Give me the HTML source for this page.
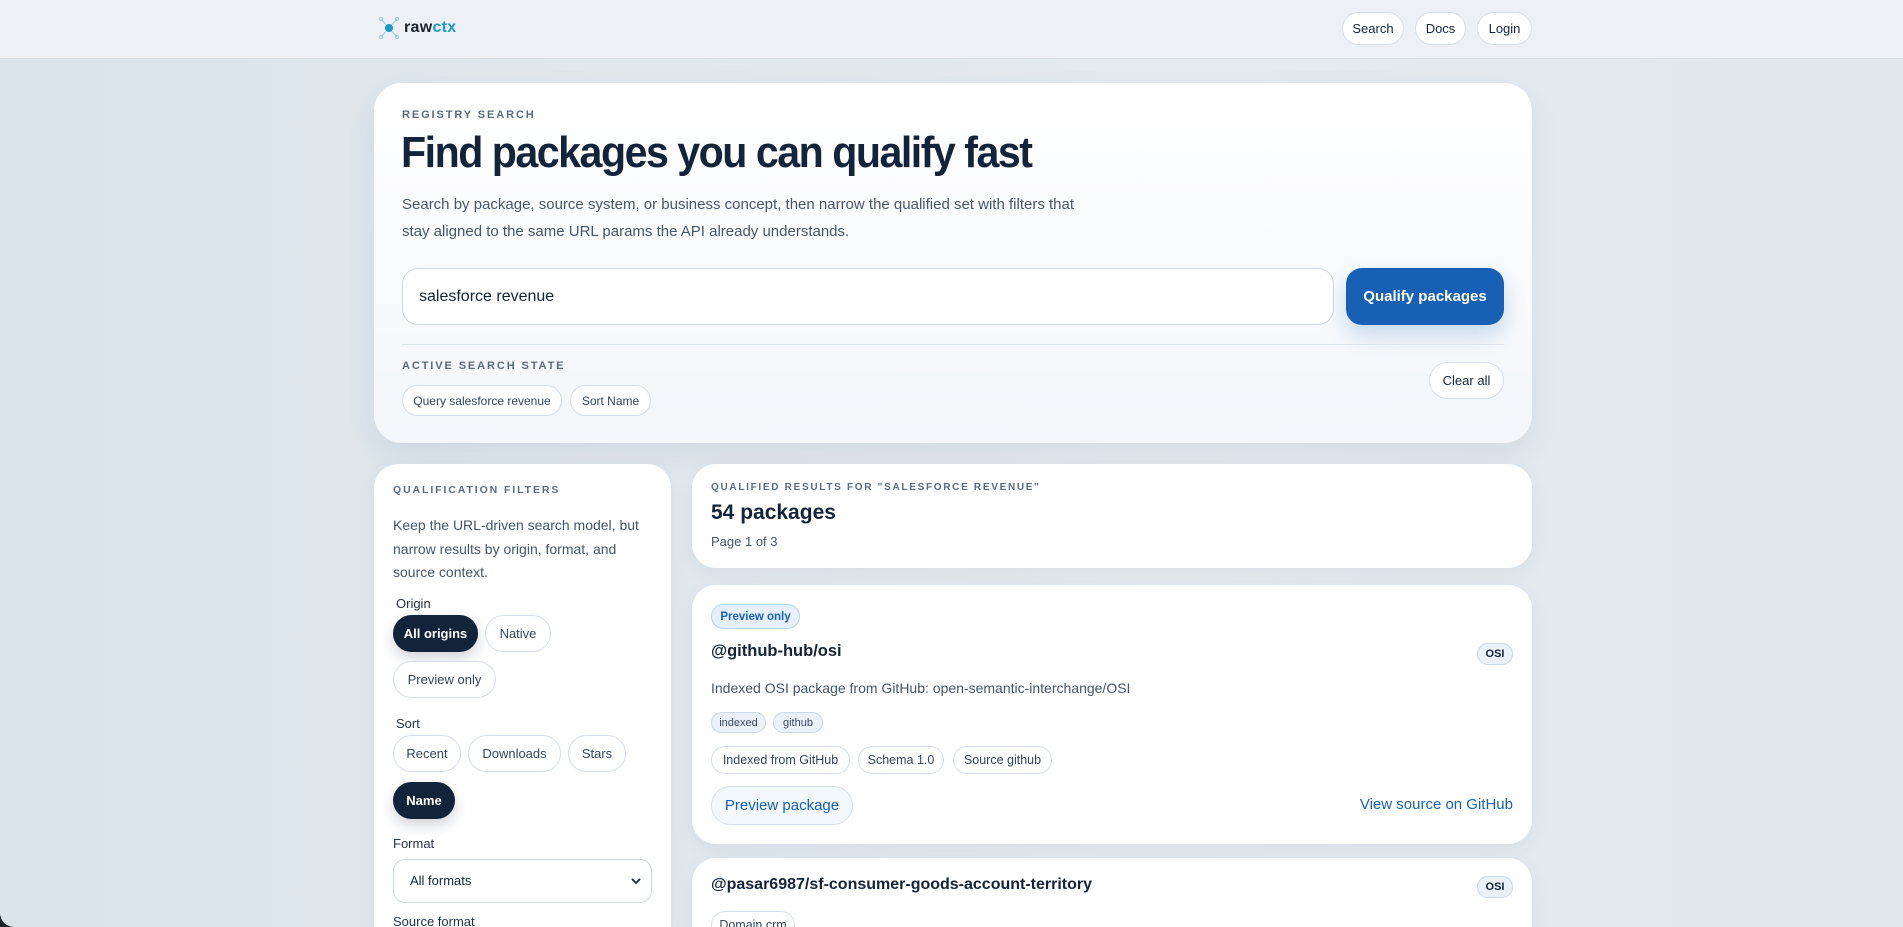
<!DOCTYPE html>
<html><head><meta charset="utf-8"><style>
*{box-sizing:border-box;margin:0;padding:0}
html,body{width:1903px;height:927px;overflow:hidden;background:#1a2328}
#pg{position:absolute;left:0;top:0;width:1903px;height:927px;background:linear-gradient(90deg,#dbe4eb,#e4eaef 60%,#e2e8ee);border-bottom-left-radius:14px;overflow:hidden;font-family:"Liberation Sans","Noto Sans CJK KR",sans-serif;color:#13243a}
.a{position:absolute;white-space:nowrap}
.hdr{left:0;top:0;width:1903px;height:59px;background:#edf1f5;border-bottom:1px solid #d6dfe7}
.nav{height:33px;top:12px;border:1px solid #d6dee8;border-radius:17px;background:#fff;font-size:13px;display:flex;align-items:center;justify-content:center;color:#13243a}
.card{background:#fff;border-radius:24px;box-shadow:0 6px 20px rgba(40,70,110,.06)}
.lbl{font-size:11px;font-weight:bold;letter-spacing:1.9px;color:#5a6b80}
.pill{border:1px solid #d6dfe9;border-radius:20px;background:#fff;display:flex;align-items:center;justify-content:center;font-size:13px;color:#34465b}
.dk{background:#13243a;color:#fff;border-color:#13243a;font-weight:bold;box-shadow:0 6px 14px rgba(19,36,58,.2)}
.tag{border:1px solid #c9d7e8;background:#eaf1f9;border-radius:12px;font-size:11px;display:flex;align-items:center;justify-content:center;color:#3a4b60}
</style></head><body><div id="pg">
<div class="a hdr"></div>
<svg class="a" style="left:378px;top:16px" width="22" height="24" viewBox="0 0 22 24"><g stroke="#9fd4e4" stroke-width="1" fill="none"><line x1="3" y1="3" x2="19" y2="21"/><line x1="19" y1="3" x2="3" y2="21"/><circle cx="3" cy="3" r="1.6"/><circle cx="19" cy="3" r="1.6"/><circle cx="3" cy="21" r="1.6"/><circle cx="19" cy="21" r="1.6"/></g><circle cx="11" cy="12" r="4" fill="#1a9ac4"/></svg>
<div class="a" style="left:404px;top:19px;font-size:16px;font-weight:bold;letter-spacing:.3px"><span style="color:#1b2530">raw</span><span style="color:#1d9bc2">ctx</span></div>
<div class="a nav" style="left:1342px;width:62px">Search</div>
<div class="a nav" style="left:1415px;width:51px">Docs</div>
<div class="a nav" style="left:1477px;width:55px">Login</div>

<div class="a card" style="left:374px;top:83px;width:1158px;height:360px;border-radius:28px;background:linear-gradient(180deg,#fff,#f3f6fa);box-shadow:0 12px 30px rgba(40,70,110,.08)"></div>
<div class="a lbl" style="left:402px;top:109px">REGISTRY SEARCH</div>
<div class="a" style="left:401px;top:126px;font-size:44px;font-weight:bold;letter-spacing:-1.6px;line-height:54px;color:#13243a;transform:scaleX(.935);transform-origin:left">Find packages you can qualify fast</div>
<div class="a" style="left:402px;top:191px;font-size:15px;line-height:27px;color:#45566b;white-space:normal;width:700px">Search by package, source system, or business concept, then narrow the qualified set with filters that stay aligned to the same URL params the API already understands.</div>
<div class="a" style="left:402px;top:268px;width:932px;height:57px;border:1px solid #cfd9e3;border-radius:16px;background:#fff;font-size:16px;line-height:55px;padding-left:16px;color:#13243a">salesforce revenue</div>
<div class="a" style="left:1346px;top:268px;width:158px;height:57px;border-radius:16px;background:#1760b5;color:#fff;font-size:15px;font-weight:bold;display:flex;align-items:center;justify-content:center;box-shadow:0 10px 22px rgba(23,96,181,.22)">Qualify packages</div>
<div class="a" style="left:402px;top:344px;width:1102px;height:1px;background:#dbe3eb"></div>
<div class="a lbl" style="left:402px;top:360px">ACTIVE SEARCH STATE</div>
<div class="a pill" style="left:402px;top:385px;width:160px;height:31px;font-size:12px">Query salesforce revenue</div>
<div class="a pill" style="left:570px;top:385px;width:81px;height:31px;font-size:12px">Sort Name</div>
<div class="a pill" style="left:1429px;top:362px;width:75px;height:37px;border-radius:19px;font-size:13px;color:#13243a">Clear all</div>

<div class="a card" style="left:374px;top:464px;width:297px;height:520px"></div>
<div class="a lbl" style="left:393px;top:484px;font-size:10.5px">QUALIFICATION FILTERS</div>
<div class="a" style="left:393px;top:514px;width:250px;white-space:normal;font-size:14px;line-height:23.5px;color:#45566b">Keep the URL-driven search model, but narrow results by origin, format, and source context.</div>
<div class="a" style="left:396px;top:596px;font-size:13px;color:#23344a">Origin</div>
<div class="a pill dk" style="left:393px;top:615px;width:85px;height:37px">All origins</div>
<div class="a pill" style="left:485px;top:615px;width:66px;height:37px">Native</div>
<div class="a pill" style="left:393px;top:661px;width:103px;height:37px">Preview only</div>
<div class="a" style="left:396px;top:716px;font-size:13px;color:#23344a">Sort</div>
<div class="a pill" style="left:393px;top:735px;width:68px;height:37px">Recent</div>
<div class="a pill" style="left:468px;top:735px;width:93px;height:37px">Downloads</div>
<div class="a pill" style="left:568px;top:735px;width:58px;height:37px">Stars</div>
<div class="a pill dk" style="left:393px;top:782px;width:62px;height:37px">Name</div>
<div class="a" style="left:393px;top:836px;font-size:13px;color:#23344a">Format</div>
<div class="a" style="left:393px;top:859px;width:259px;height:44px;border:1px solid #cfd9e3;border-radius:12px;background:#fff;font-size:13px;line-height:42px;padding-left:16px;color:#13243a">All formats<svg style="position:absolute;right:10px;top:17px" width="10" height="8" viewBox="0 0 10 8"><path d="M1 2l4 4 4-4" stroke="#13243a" stroke-width="1.8" fill="none"/></svg></div>
<div class="a" style="left:393px;top:914px;font-size:13px;color:#23344a">Source format</div>

<div class="a card" style="left:692px;top:464px;width:840px;height:104px"></div>
<div class="a lbl" style="left:711px;top:482px;font-size:10px;letter-spacing:1.7px">QUALIFIED RESULTS FOR "SALESFORCE REVENUE"</div>
<div class="a" style="left:711px;top:501px;font-size:21px;font-weight:bold;color:#13243a">54 packages</div>
<div class="a" style="left:711px;top:534px;font-size:13px;color:#45566b">Page 1 of 3</div>

<div class="a card" style="left:692px;top:585px;width:840px;height:259px"></div>
<div class="a" style="left:711px;top:604px;width:89px;height:25px;border:1px solid #b9d3f3;background:#e6f0fc;border-radius:13px;font-size:11.5px;font-weight:bold;color:#1760b5;display:flex;align-items:center;justify-content:center">Preview only</div>
<div class="a" style="left:711px;top:642px;font-size:16.5px;font-weight:bold;color:#13243a">@github-hub/osi</div>
<div class="a tag" style="left:1477px;top:643px;width:36px;height:22px;font-weight:bold;color:#13243a">OSI</div>
<div class="a" style="left:711px;top:680px;font-size:14px;color:#45566b">Indexed OSI package from GitHub: open-semantic-interchange/OSI</div>
<div class="a tag" style="left:711px;top:712px;width:55px;height:21px">indexed</div>
<div class="a tag" style="left:773px;top:712px;width:50px;height:21px">github</div>
<div class="a pill" style="left:711px;top:746px;width:139px;height:28px;font-size:12.5px">Indexed from GitHub</div>
<div class="a pill" style="left:858px;top:746px;width:86px;height:28px;font-size:12.5px">Schema 1.0</div>
<div class="a pill" style="left:953px;top:746px;width:99px;height:28px;font-size:12.5px">Source github</div>
<div class="a pill" style="left:711px;top:786px;width:142px;height:39px;background:#f3f8fe;font-size:15px;color:#1760b5">Preview package</div>
<div class="a" style="right:390px;top:796px;font-size:15px;color:#1760b5">View source on GitHub</div>

<div class="a card" style="left:692px;top:858px;width:840px;height:120px"></div>
<div class="a" style="left:711px;top:876px;font-size:16px;font-weight:bold;color:#13243a">@pasar6987/sf-consumer-goods-account-territory</div>
<div class="a tag" style="left:1477px;top:876px;width:36px;height:22px;font-weight:bold;color:#13243a">OSI</div>
<div class="a pill" style="left:711px;top:911px;width:84px;height:28px;font-size:12.5px">Domain crm</div>
</div></body></html>
